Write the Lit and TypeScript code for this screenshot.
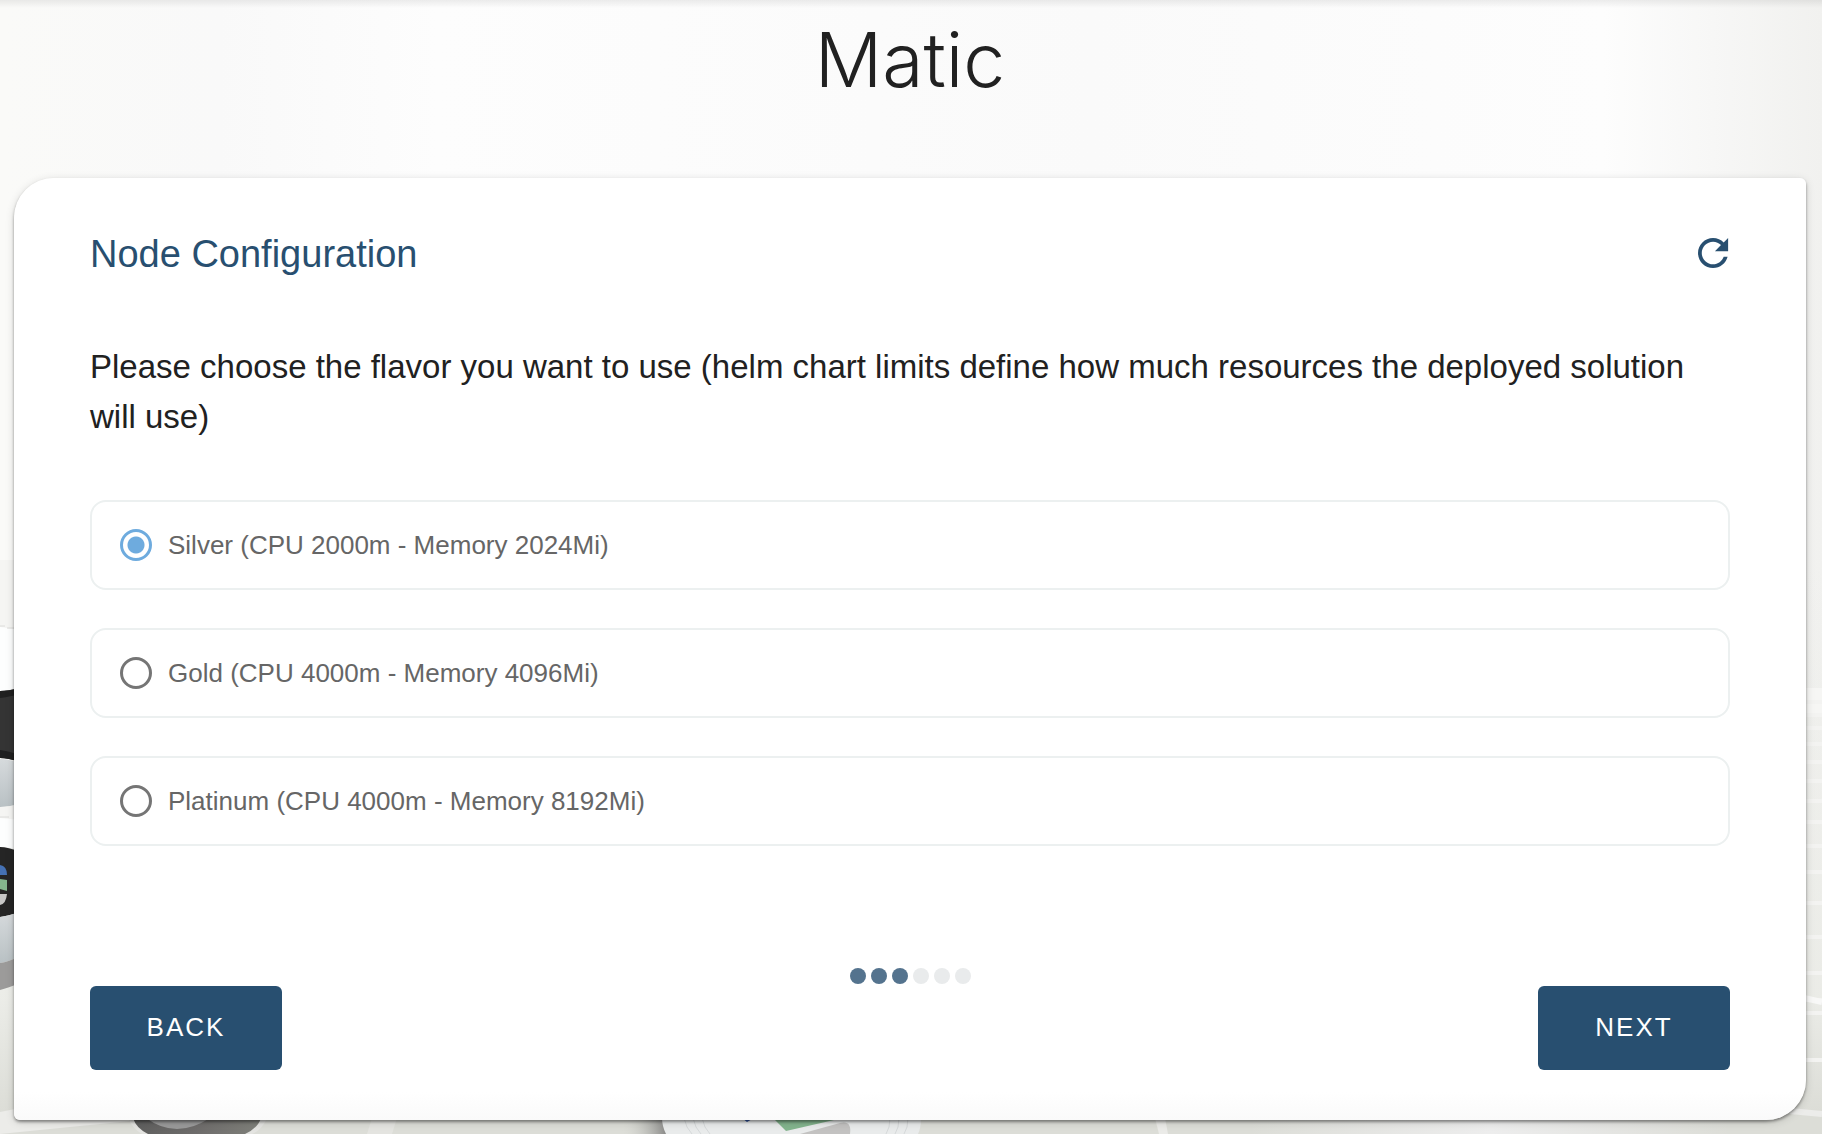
import { LitElement, html, svg, css } from "lit";
import { customElement, property, state } from "lit/decorators.js";
import { classMap } from "lit/directives/class-map.js";

interface Flavor {
  id: string;
  label: string;
}

const FLAVORS: Flavor[] = [
  { id: "silver", label: "Silver (CPU 2000m - Memory 2024Mi)" },
  { id: "gold", label: "Gold (CPU 4000m - Memory 4096Mi)" },
  { id: "platinum", label: "Platinum (CPU 4000m - Memory 8192Mi)" },
];

/* Heights of the pale gaps between the planks on the right-hand side. */
const PLANK_GAPS = [702, 715, 728, 744, 762, 781, 801, 822, 846, 872, 903, 937, 973, 1000, 1013, 1060];

/* Desk scene that shows around the edges of the card. */
@customElement("desk-backdrop")
export class DeskBackdrop extends LitElement {
  static styles = css`
    :host {
      display: block;
      overflow: hidden;
      background:
        linear-gradient(to bottom, rgba(0, 0, 0, 0.07), rgba(0, 0, 0, 0) 8px),
        linear-gradient(to bottom, rgba(236, 237, 232, 0) 50%, rgba(234, 235, 230, 0.9) 88%, #dcddd7 98%),
        linear-gradient(to right, #fafaf8 0, #f9f9f9 12%, #fdfdfd 24%, #fafafa 60%, #fdfdfd 88%, #f7f7f6 94%, #f1f1ef 100%);
    }
    .scene {
      position: absolute;
      inset: 0;
      width: 100%;
      height: 100%;
    }
  `;

  render() {
    return html`
      <svg class="scene" viewBox="0 0 1822 1134" preserveAspectRatio="none" aria-hidden="true">
        <defs>
          <linearGradient id="rim" x1="0" y1="0" x2="0" y2="1">
            <stop offset="0" stop-color="#d6dadc"></stop>
            <stop offset="1" stop-color="#b9c1c4"></stop>
          </linearGradient>
          <linearGradient id="shade" x1="0" y1="0" x2="1" y2="0">
            <stop offset="0" stop-color="#d6d7d1" stop-opacity="0"></stop>
            <stop offset="1" stop-color="#8a8a88"></stop>
          </linearGradient>
          <linearGradient id="cup" x1="0" y1="0" x2="1" y2="0">
            <stop offset="0" stop-color="#5f5f5e"></stop>
            <stop offset="0.5" stop-color="#6e6c6b"></stop>
            <stop offset="1" stop-color="#7f807a"></stop>
          </linearGradient>
          <linearGradient id="glow" x1="0" y1="0" x2="1" y2="0">
            <stop offset="0" stop-color="#ededed" stop-opacity="0"></stop>
            <stop offset="0.5" stop-color="#ededed"></stop>
            <stop offset="1" stop-color="#ededed" stop-opacity="0"></stop>
          </linearGradient>
        </defs>

        <rect x="0" y="560" width="20" height="70" fill="#f5f5f3"></rect>
        <path d="M0 627 L20 630 V694 H0Z" fill="#fdfefe"></path>
        <path d="M0 626 H5 M7 628 H20" stroke="#dcdcda" fill="none"></path>
        <path d="M0 691 Q8 691 20 688 V762 Q8 758 0 758Z" fill="#343434"></path>
        <path d="M0 691 Q8 691 20 688 V694 Q8 697 0 698Z M0 750 Q8 751 20 755 V762 Q8 758 0 758Z" fill="#202020"></path>
        <path d="M0 759 Q8 759 20 763 V804 Q8 807 0 807Z" fill="url(#rim)"></path>
        <path d="M0 807 Q8 807 20 804 V820 H0Z" fill="#f5f5f3"></path>
        <path d="M0 818 L20 820 V850 Q8 847 0 847Z" fill="#fdfefe"></path>
        <path d="M0 817 H9" stroke="#dcdcda" fill="none"></path>
        <path d="M0 847 Q8 847 20 852 V912 Q8 916 0 917Z" fill="#252525"></path>
        <path d="M0 865 Q7 866 7 875 H0Z" fill="#4571b4"></path>
        <path d="M0 879 L7 880 V891 L0 889Z" fill="#85b58e"></path>
        <path d="M0 894 H7 Q6 904 0 905Z" fill="#c8c8c7"></path>
        <path d="M0 917 Q8 916 20 912 V956 Q8 962 0 963Z" fill="url(#rim)"></path>
        <path d="M0 963 Q8 962 20 956 V983 Q8 988 0 990Z" fill="#9c9b9a"></path>

        <path d="M0 1112 L20 1108 V1120 H140 L0 1134Z" fill="#ecece9"></path>
        <path d="M128 1118 H267 Q262 1130 252 1134 H142 Q132 1128 128 1118Z" fill="#e4e4e1"></path>
        <path d="M133 1118 H261 Q258 1128 245 1134 H148 Q136 1128 133 1118Z" fill="url(#cup)"></path>
        <path d="M146 1118 Q176 1140 210 1118Z" fill="#9a9a9a"></path>
        <path d="M372 1118 H397 L392 1134 H367Z" fill="#e4e4e0"></path>

        <rect x="622" y="1118" width="44" height="16" fill="url(#shade)"></rect>
        <path d="M662 1118 H921 Q921 1128 918 1134 H666 Q662 1126 662 1118Z" fill="#e9ebeb"></path>
        <path d="M684 1118 Q686 1128 692 1134 M693 1118 Q695 1128 701 1134 M702 1118 Q704 1128 710 1134 M890 1118 Q890 1128 886 1134 M899 1118 Q899 1128 895 1134 M908 1118 Q908 1128 904 1134" stroke="#d6d9da" fill="none"></path>
        <path d="M742 1118 H754 L747 1122Z" fill="#2f519c"></path>
        <path d="M775 1120 H834 L786 1131Z" fill="#83b48d"></path>
        <path d="M800 1134 L840 1123 Q852 1120 850 1134Z" fill="#c3c2c1"></path>
        <path d="M1155 1118 H1165 L1168 1134 H1159Z" fill="#ebebe8"></path>
        <rect x="1250" y="1118" width="480" height="16" fill="url(#glow)"></rect>

        <rect x="1800" y="688" width="22" height="26" fill="#f6f6f4"></rect>
        ${PLANK_GAPS.map(
          (y) => svg`<path d=${`M1800 ${y} L1822 ${y}`} stroke="#f3f3f1" stroke-width="4"></path>`
        )}
        <path d="M1800 997 L1822 1002" stroke="#f8f8f7" stroke-width="6"></path>
        <path d="M1790 1111 L1822 1114" stroke="#ececea" stroke-width="6"></path>
      </svg>
    `;
  }
}

/* Row of dots, filled up to the current step. */
@customElement("step-dots")
export class StepDots extends LitElement {
  @property({ type: Number }) total = 6;
  @property({ type: Number }) current = 1;

  static styles = css`
    :host {
      display: flex;
      justify-content: center;
      gap: 5px;
    }
    .dot {
      width: 16px;
      height: 16px;
      border-radius: 50%;
      background: #e9ebec;
    }
    .done {
      background: #54738e;
    }
  `;

  render() {
    return Array.from(
      { length: this.total },
      (_, i) => html`<span class=${classMap({ dot: true, done: i < this.current })}></span>`
    );
  }
}

@customElement("app-root")
export class AppRoot extends LitElement {
  @state() private flavor = "silver";
  @state() private step = 3;

  static styles = css`
    :host {
      display: block;
      position: relative;
      min-height: 100vh;
      box-sizing: border-box;
      overflow: hidden;
      font-family: "Liberation Sans", Arial, sans-serif;
      color: #212121;
    }
    * {
      box-sizing: border-box;
    }
    .backdrop {
      position: absolute;
      inset: 0;
    }
    .page {
      position: relative;
      display: flex;
      flex-direction: column;
      min-height: 100vh;
      padding: 0 16px 14px 14px;
    }
    .title {
      margin: 0;
      padding: 12px 0 70px;
      font-family: Inter, "Liberation Sans", sans-serif;
      font-size: 75px;
      line-height: 96px;
      font-weight: 300;
      text-align: center;
    }
    .card {
      flex: 1;
      display: flex;
      flex-direction: column;
      padding: 52px 76px 50px;
      border-radius: 40px 6px 40px 6px;
      background: linear-gradient(to top, #fafafa, #ffffff 28px);
      box-shadow: 0 2px 3px rgba(0, 0, 0, 0.4), 0 2px 10px rgba(0, 0, 0, 0.14);
    }
    .head {
      display: flex;
      align-items: center;
      justify-content: space-between;
    }
    .heading {
      margin: 0;
      font-size: 38px;
      line-height: 48px;
      font-weight: 400;
      color: #284f70;
    }
    .refresh {
      display: flex;
      padding: 0;
      border: 0;
      background: none;
      color: #284f70;
      cursor: pointer;
    }
    .refresh svg {
      width: 32px;
      height: 32px;
      fill: currentColor;
    }
    .choices {
      margin: 0;
      padding: 0;
      border: 0;
      min-width: 0;
    }
    .prompt {
      padding: 64px 0 58px;
      font-size: 33px;
      line-height: 50px;
    }
    .options {
      display: flex;
      flex-direction: column;
      gap: 38px;
    }
    .option {
      display: flex;
      align-items: center;
      gap: 16px;
      height: 90px;
      padding: 0 28px;
      border: 2px solid #ecf0f0;
      border-radius: 16px;
      font-size: 26px;
      line-height: 32px;
      color: #666666;
      cursor: pointer;
    }
    .radio {
      appearance: none;
      flex: none;
      width: 32px;
      height: 32px;
      margin: 0;
      border: 3px solid #757575;
      border-radius: 50%;
      cursor: pointer;
    }
    .radio:checked {
      border-color: #6eabde;
      background: radial-gradient(circle, #6eabde 8px, transparent 9px);
    }
    .dots {
      margin-top: auto;
      padding-bottom: 2px;
    }
    .actions {
      display: flex;
      justify-content: space-between;
    }
    .action {
      width: 192px;
      height: 84px;
      padding: 0 0 2px;
      border: 0;
      border-radius: 6px;
      background: #284f70;
      color: #ffffff;
      font: 400 26px/32px "Liberation Sans", Arial, sans-serif;
      letter-spacing: 2px;
      text-transform: uppercase;
      cursor: pointer;
    }
  `;

  private reset() {
    this.flavor = FLAVORS[0].id;
  }

  private move(delta: number) {
    this.step = Math.min(6, Math.max(1, this.step + delta));
  }

  render() {
    return html`
      <desk-backdrop class="backdrop"></desk-backdrop>
      <main class="page">
        <h1 class="title">Matic</h1>
        <section class="card">
          <header class="head">
            <h2 class="heading">Node Configuration</h2>
            <button class="refresh" type="button" aria-label="Reset" @click=${this.reset}>
              <svg viewBox="4 4 17 17" aria-hidden="true">
                <path d="M17.65 6.35C16.2 4.9 14.21 4 12 4c-4.42 0-7.99 3.58-7.99 8s3.57 8 7.99 8c3.73 0 6.84-2.55 7.73-6h-2.08c-.82 2.33-3.04 4-5.65 4-3.31 0-6-2.69-6-6s2.69-6 6-6c1.66 0 3.14.69 4.22 1.78L13 11h7V4l-2.35 2.35z"></path>
              </svg>
            </button>
          </header>
          <fieldset class="choices">
            <legend class="prompt">Please choose the flavor you want to use (helm chart limits define how much resources the deployed solution will use)</legend>
            <div class="options">
              ${FLAVORS.map(
                (f) => html`
                  <label class="option" for=${f.id}>
                    <input
                      class="radio"
                      type="radio"
                      name="flavor"
                      id=${f.id}
                      .checked=${this.flavor === f.id}
                      @change=${() => (this.flavor = f.id)}
                    />
                    <span>${f.label}</span>
                  </label>
                `
              )}
            </div>
          </fieldset>
          <step-dots class="dots" .total=${6} .current=${this.step}></step-dots>
          <nav class="actions">
            <button class="action" type="button" @click=${() => this.move(-1)}>Back</button>
            <button class="action" type="button" @click=${() => this.move(1)}>Next</button>
          </nav>
        </section>
      </main>
    `;
  }
}
